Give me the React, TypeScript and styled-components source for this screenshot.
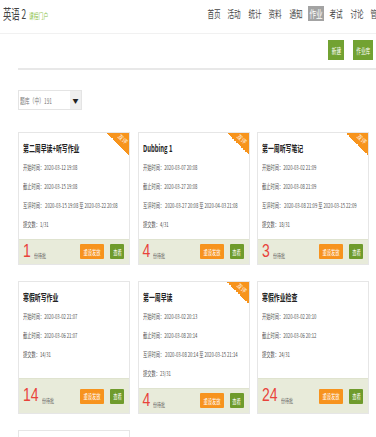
import React from "react";
import styled, { createGlobalStyle } from "styled-components";

const Global = createGlobalStyle`
  html, body { margin: 0; padding: 0; background: #fff; }
  body { font-family: "Noto Sans CJK SC", "Noto Sans", sans-serif; color: #333; overflow: hidden; }
  * { box-sizing: border-box; }
`;

const Page = styled.div`
  width: 376px;
  height: 437px;
  overflow: hidden;
`;

/* a run of text squeezed horizontally, as the reference's narrow face */
const Sq = styled.span<{ $x?: number; $o?: string }>`
  display: inline-block;
  white-space: nowrap;
  transform: scaleX(${(p) => p.$x ?? 0.66});
  transform-origin: ${(p) => p.$o ?? "left center"};
`;

const Header = styled.div`
  height: 34px;
  border-bottom: 1px solid #f1f1f1;
  display: flex;
  align-items: flex-start;
  overflow: hidden;
  padding-top: 6px;
`;

const Brand = styled.div`
  width: 206px;
  flex-shrink: 0;
  padding-left: 3px;
  display: flex;
  align-items: baseline;
  height: 15px;
`;

const BrandTitle = styled(Sq)`
  font-size: 13.5px;
  line-height: 15px;
  color: #444;
  width: 26px;
`;

const BrandSub = styled(Sq)`
  font-size: 7.5px;
  color: #8cbf4a;
`;

const Nav = styled.div`
  display: flex;
  gap: 4.4px;
  flex-shrink: 0;
`;

const NavItem = styled.span<{ $active?: boolean }>`
  width: 16px;
  height: 15px;
  display: flex;
  align-items: center;
  justify-content: center;
  font-size: 10px;
  color: ${(p) => (p.$active ? "#fff" : "#444")};
  background: ${(p) => (p.$active ? "#a3a3a3" : "transparent")};
`;

const Toolbar = styled.div`
  display: flex;
  justify-content: flex-end;
  gap: 9px;
  padding: 6px 3px 0 0;
  height: 36px;
  border-bottom: 2px solid #e8e8e8;
  margin-left: 18px;
`;

const ToolButton = styled.span<{ $w: number }>`
  height: 20px;
  width: ${(p) => p.$w}px;
  background: #72a232;
  color: #fff;
  font-size: 7.5px;
  display: flex;
  align-items: center;
  justify-content: center;
`;

const FilterRow = styled.div`
  padding: 20px 0 0 18px;
  height: 62px;
`;

const Select = styled.div`
  width: 64px;
  height: 20px;
  border: 1px solid #e4e4e4;
  display: flex;
  font-size: 7.5px;
  color: #777;
`;

const SelectText = styled.div`
  flex: 1;
  display: flex;
  align-items: center;
  padding-left: 1px;
  overflow: hidden;
`;

const SelectArrow = styled.div`
  width: 11px;
  background: #efefef;
  display: flex;
  align-items: center;
  justify-content: center;
  font-size: 6px;
  color: #222;
`;

const Grid = styled.div`
  display: grid;
  grid-template-columns: repeat(3, 112px);
  column-gap: 7.5px;
  row-gap: 16px;
  padding-left: 18px;
`;

const Card = styled.div`
  position: relative;
  border: 1px solid #e6e6e6;
  background: #fff;
  height: 133px;
  display: flex;
  flex-direction: column;
  overflow: hidden;
`;

const Body = styled.div`
  flex: 1;
  padding: 9px 4px 0 4px;
  display: flex;
  flex-direction: column;
`;

const Title = styled(Sq)`
  font-size: 9.5px;
  font-weight: 700;
  color: #222;
  line-height: 12px;
  margin-bottom: 8.5px;
`;

const Field = styled(Sq)`
  font-size: 6.5px;
  color: #555;
  line-height: 9px;
  margin-bottom: 10px;
`;

const Footer = styled.div`
  height: 35px;
  background: #e8ebda;
  border-top: 1px solid #dfe3cf;
  display: flex;
  align-items: center;
  padding: 0 5px 0 4px;
`;

const Count = styled.span`
  font-family: "Liberation Sans", sans-serif;
  font-size: 14px;
  line-height: 14px;
  color: #e8433a;
  display: inline-block;
  transform: scaleY(1.35);
  transform-origin: center bottom;
  margin-right: 3px;
  margin-top: 2px;
`;

const CountLabel = styled.span`
  flex: 1;
  font-size: 6px;
  color: #666;
  margin-top: 8px;
`;

const Btn = styled.span<{ $color: string; $w: number }>`
  height: 15px;
  width: ${(p) => p.$w}px;
  background: ${(p) => p.$color};
  color: #fff;
  font-size: 6.5px;
  display: flex;
  align-items: center;
  justify-content: center;
  border-radius: 1px;
  margin-left: 6px;
`;

const Ribbon = styled.div`
  position: absolute;
  top: 0;
  right: 0;
  width: 22px;
  height: 22px;
  background: linear-gradient(45deg, transparent 50%, #f7941d 50%);
`;

const RibbonText = styled.span`
  position: absolute;
  top: 3px;
  right: 1px;
  font-size: 5.5px;
  line-height: 7px;
  color: #fff;
  transform: rotate(45deg);
  white-space: nowrap;
`;

const EmptyCard = styled(Card)`
  height: 40px;
`;

type Item = {
  title: string;
  start: string;
  end: string;
  peer?: string;
  submit: string;
  pending: number;
};

const items: Item[] = [
  { title: "第二周早读+听写作业", start: "2020-03-12 19:08", end: "2020-03-15 19:08", peer: "2020-03-15 19:08 至 2020-03-22 20:08", submit: "1/31", pending: 1 },
  { title: "Dubbing 1", start: "2020-03-07 20:08", end: "2020-03-27 20:08", peer: "2020-03-27 20:08 至 2020-04-03 21:08", submit: "4/31", pending: 4 },
  { title: "第一周听写笔记", start: "2020-03-02 21:09", end: "2020-03-08 21:09", peer: "2020-03-08 21:09 至 2020-03-15 22:09", submit: "18/31", pending: 3 },
  { title: "寒假听写作业", start: "2020-03-02 21:07", end: "2020-03-06 21:07", submit: "14/31", pending: 14 },
  { title: "第一周早读", start: "2020-03-02 20:13", end: "2020-03-08 20:14", peer: "2020-03-08 20:14 至 2020-03-15 21:14", submit: "23/31", pending: 4 },
  { title: "寒假作业检查", start: "2020-03-02 20:10", end: "2020-03-06 20:12", submit: "24/31", pending: 24 },
];

const nav = ["首页", "活动", "统计", "资料", "通知", "作业", "考试", "讨论", "管理"];

export default function App() {
  return (
    <Page>
      <Global />
      <Header>
        <Brand>
          <BrandTitle $x={0.62}>英语 2</BrandTitle>
          <BrandSub $x={0.64}>课程门户</BrandSub>
        </Brand>
        <Nav>
          {nav.map((n) => (
            <NavItem key={n} $active={n === "作业"}>
              <Sq $x={0.66} $o="center">{n}</Sq>
            </NavItem>
          ))}
        </Nav>
      </Header>
      <Toolbar>
        <ToolButton $w={16}><Sq $x={0.62} $o="center">新建</Sq></ToolButton>
        <ToolButton $w={20}><Sq $x={0.62} $o="center">作业库</Sq></ToolButton>
      </Toolbar>
      <FilterRow>
        <Select>
          <SelectText><Sq $x={0.64}>题库（中）191</Sq></SelectText>
          <SelectArrow>▼</SelectArrow>
        </Select>
      </FilterRow>
      <Grid>
        {items.map((it, i) => (
          <Card key={i}>
            {it.peer && (
              <Ribbon>
                <RibbonText>互评</RibbonText>
              </Ribbon>
            )}
            <Body>
              <Title $x={0.62}>{it.title}</Title>
              <Field $x={0.65}>开始时间：{it.start}</Field>
              <Field $x={0.65}>截止时间：{it.end}</Field>
              {it.peer && <Field $x={0.65}>互评时间：  {it.peer}</Field>}
              <Field $x={0.65}>提交数：{it.submit}</Field>
            </Body>
            <Footer>
              <Count>{it.pending}</Count>
              <CountLabel><Sq $x={0.66}>份待批</Sq></CountLabel>
              <Btn $color="#f7931e" $w={24}><Sq $x={0.66} $o="center">重设发放</Sq></Btn>
              <Btn $color="#6f9b2c" $w={14}><Sq $x={0.66} $o="center">查看</Sq></Btn>
            </Footer>
          </Card>
        ))}
        <EmptyCard />
      </Grid>
    </Page>
  );
}
